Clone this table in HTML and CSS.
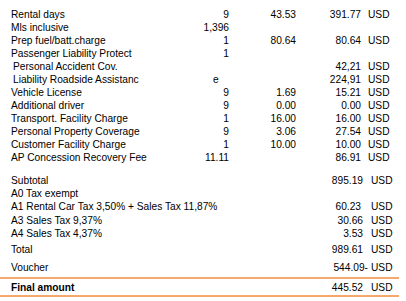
FILE: index.html
```html
<!DOCTYPE html>
<html lang="en">
<head>
<meta charset="utf-8">
<title>Invoice</title>
<link rel="stylesheet" href="styles.css">
</head>
<body>
<div class="invoice">
  <div class="items">
    <div class="row"><span class="label">Rental days</span><span class="qty">9</span><span class="price">43.53</span><span class="amount">391.77</span><span class="cur">USD</span></div>
    <div class="row"><span class="label">Mls inclusive</span><span class="qty">1,396</span><span class="price"></span><span class="amount"></span><span class="cur"></span></div>
    <div class="row"><span class="label">Prep fuel/batt.charge</span><span class="qty">1</span><span class="price">80.64</span><span class="amount">80.64</span><span class="cur">USD</span></div>
    <div class="row"><span class="label">Passenger Liability Protect</span><span class="qty">1</span><span class="price"></span><span class="amount"></span><span class="cur"></span></div>
    <div class="row"><span class="label sub">Personal Accident Cov.</span><span class="qty"></span><span class="price"></span><span class="amount">42,21</span><span class="cur">USD</span></div>
    <div class="row"><span class="label sub">Liability Roadside Assistanc</span><span class="qty overflow">e</span><span class="price"></span><span class="amount">224,91</span><span class="cur">USD</span></div>
    <div class="row"><span class="label">Vehicle License</span><span class="qty">9</span><span class="price">1.69</span><span class="amount">15.21</span><span class="cur">USD</span></div>
    <div class="row"><span class="label">Additional driver</span><span class="qty">9</span><span class="price">0.00</span><span class="amount">0.00</span><span class="cur">USD</span></div>
    <div class="row"><span class="label">Transport. Facility Charge</span><span class="qty">1</span><span class="price">16.00</span><span class="amount">16.00</span><span class="cur">USD</span></div>
    <div class="row"><span class="label">Personal Property Coverage</span><span class="qty">9</span><span class="price">3.06</span><span class="amount">27.54</span><span class="cur">USD</span></div>
    <div class="row"><span class="label">Customer Facility Charge</span><span class="qty">1</span><span class="price">10.00</span><span class="amount">10.00</span><span class="cur">USD</span></div>
    <div class="row"><span class="label">AP Concession Recovery Fee</span><span class="qty">11.11</span><span class="price"></span><span class="amount">86.91</span><span class="cur">USD</span></div>
  </div>

  <div class="row subtotal"><span class="label">Subtotal</span><span class="qty"></span><span class="price"></span><span class="amount shift">895.19</span><span class="cur shift">USD</span></div>
  <div class="row"><span class="label">A0 Tax exempt</span><span class="qty"></span><span class="price"></span><span class="amount"></span><span class="cur"></span></div>
  <div class="row"><span class="label wide">A1 Rental Car Tax 3,50% + Sales Tax 11,87%</span><span class="amount">60.23</span><span class="cur shift">USD</span></div>
  <div class="row a3"><span class="label">A3 Sales Tax 9,37%</span><span class="qty"></span><span class="price"></span><span class="amount shift">30.66</span><span class="cur shift">USD</span></div>
  <div class="row"><span class="label">A4 Sales Tax 4,37%</span><span class="qty"></span><span class="price"></span><span class="amount shift">3.53</span><span class="cur shift">USD</span></div>
  <div class="row total"><span class="label">Total</span><span class="qty"></span><span class="price"></span><span class="amount shift">989.61</span><span class="cur shift">USD</span></div>
  <div class="row voucher"><span class="label">Voucher</span><span class="qty"></span><span class="price"></span><span class="amount neg">544.09-</span><span class="cur neg">USD</span></div>

  <div class="row final"><span class="label">Final amount</span><span class="qty"></span><span class="price"></span><span class="amount shift">445.52</span><span class="cur shift">USD</span></div>
</div>
</body>
</html>
```

FILE: styles.css
```css
html, body {
  margin: 0;
  padding: 0;
  background: #ffffff;
}

body {
  font-family: "Liberation Sans", Arial, Helvetica, sans-serif;
  font-size: 10.2px;
  color: #000000;
}

.invoice {
  width: 406px;
  padding-top: 8px;
}

.row {
  display: grid;
  grid-template-columns: 181px 48px 67px 65px 1fr;
  height: 13px;
  line-height: 13px;
  white-space: nowrap;
}

.label {
  padding-left: 11px;
}

.label.sub {
  padding-left: 13px;
}

.label.wide {
  grid-column: 1 / 4;
}

.qty,
.price,
.amount {
  text-align: right;
}

.qty.overflow {
  text-align: left;
  padding-left: 32px;
}

.cur {
  padding-left: 7px;
}

.amount.shift {
  position: relative;
  left: 2px;
}

.cur.shift {
  padding-left: 10px;
}

.amount.neg {
  position: relative;
  left: 7px;
}

.cur.neg {
  padding-left: 10px;
}

.subtotal {
  margin-top: 10px;
}

.a3 {
  margin-top: 1px;
}

.total {
  margin-top: 3px;
}

.voucher {
  margin-top: 5px;
  margin-bottom: 3px;
}

.final {
  border-top: 2px solid #f7a86c;
  border-bottom: 2px solid #f7a86c;
  width: 399px;
  box-sizing: border-box;
  height: 20px;
  line-height: 16px;
  padding-top: 1px;
  font-weight: bold;
}

.final .amount,
.final .cur {
  font-weight: normal;
}
```
